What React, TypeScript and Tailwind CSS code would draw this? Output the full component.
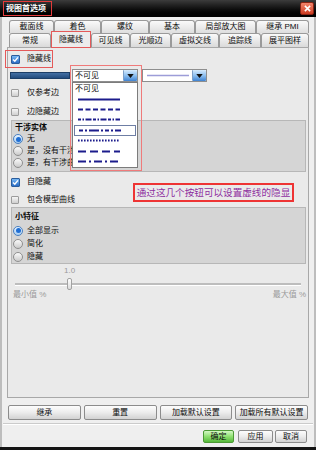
import React from 'react'

const row1 = [
  { label: '截面线', w: 'w-[45px]' },
  { label: '着色', w: 'w-[47px]' },
  { label: '螺纹', w: 'w-[48px]' },
  { label: '基本', w: 'w-[46px]' },
  { label: '局部放大图', w: 'w-[61px]' },
  { label: '继承 PMI', w: 'w-[53px]' },
]

const row2 = [
  { label: '常规', w: 'w-[42px]' },
  { label: '隐藏线', w: 'w-[40px]', active: true },
  { label: '可见线', w: 'w-[39px]' },
  { label: '光顺边', w: 'w-[41px]' },
  { label: '虚拟交线', w: 'w-[48px]' },
  { label: '追踪线', w: 'w-[42px]' },
  { label: '展平图样', w: 'w-[48px]' },
]

// dash patterns of the line-font list
const fonts = ['', '5 2.5', '3 1.5 1.5 1.5 6 1.5', '4 2 2 2 10 2 2 2', '1.6 1.4', '8 4', '8 3 2 3']

function Checkbox({ checked = false }: { checked?: boolean }) {
  if (checked) {
    return (
      <span className="flex h-[9px] w-[9px] items-center justify-center rounded-[1px] border border-[#2b5d9c] bg-linear-to-b from-[#78b8f4] to-[#2a6cc4]">
        <svg viewBox="0 0 8 8" className="h-[7px] w-[7px]">
          <path d="M1.2 4.1 3.2 6 6.8 1.6" fill="none" stroke="#fff" strokeWidth="1.6" />
        </svg>
      </span>
    )
  }
  return <span className="h-[8px] w-[8px] rounded-[1px] border border-[#9c9c9c] bg-linear-to-b from-[#f6f6f6] to-[#cfcfcf]" />
}

function Radio({ checked = false }: { checked?: boolean }) {
  return (
    <span
      className={`flex h-[10px] w-[10px] items-center justify-center rounded-full border ${
        checked
          ? 'border-[#4a7fbf] bg-linear-to-b from-[#e6f3ff] to-[#a9cdf0]'
          : 'border-[#8f8f8f] bg-linear-to-b from-[#fbfbfb] to-[#cbcbcb]'
      }`}
    >
      {checked && <span className="h-[5px] w-[5px] rounded-full bg-[#1f6ed4]" />}
    </span>
  )
}

function CheckRow({ label, checked = false, className = '' }: { label: string; checked?: boolean; className?: string }) {
  return (
    <div className={`flex h-[12px] items-center pl-[3px] ${className}`}>
      <span className="flex w-[16px]">
        <Checkbox checked={checked} />
      </span>
      <span>{label}</span>
    </div>
  )
}

function RadioRow({ label, checked = false, h = 'h-[12px]' }: { label: string; checked?: boolean; h?: string }) {
  return (
    <div className={`flex ${h} items-center pl-[1px]`}>
      <span className="flex w-[14px]">
        <Radio checked={checked} />
      </span>
      <span>{label}</span>
    </div>
  )
}

function Arrow() {
  return (
    <span className="flex h-full w-[14px] items-center justify-center rounded-[1px] border-l border-[#7d9fc8] bg-linear-to-b from-[#d6eafc] via-[#8ec0f0] to-[#3f83d2]">
      <svg viewBox="0 0 8 5" className="h-[4px] w-[7px]">
        <polygon points="0,0 8,0 4,5" fill="#111" />
      </svg>
    </span>
  )
}

function Line({ dash, color = '#1c1c8c', width = 2 }: { dash?: string; color?: string; width?: number }) {
  return (
    <svg width="42" height="3" viewBox="0 0 42 3">
      <line x1="0" y1="1.5" x2="42" y2="1.5" stroke={color} strokeWidth={width} strokeDasharray={dash || undefined} />
    </svg>
  )
}

function Button({ children, className = '' }: { children: React.ReactNode; className?: string }) {
  return (
    <div
      className={`flex items-center justify-center rounded-[2px] border border-[#8c8c8c] bg-linear-to-b from-[#fdfdfd] via-[#ececec] to-[#d2d2d2] ${className}`}
    >
      {children}
    </div>
  )
}

export default function App() {
  return (
    <div className="flex h-[450px] w-[316px] flex-col overflow-hidden bg-[#efefef] font-['Liberation_Sans','Noto_Sans_CJK_SC',sans-serif] text-[8px] leading-none text-[#0c0c0c]">
      {/* title bar */}
      <div className="flex h-[17px] shrink-0 items-center justify-between bg-linear-to-b from-[#3c3c3c] via-[#121212] to-[#000] pl-[3px] pr-[2px]">
        <span className="flex h-[15px] items-center border border-[#e23b3b] pl-[2px] pr-[5px] text-[8px] font-bold text-white">
          视图首选项
        </span>
        <span className="flex h-[13px] w-[14px] items-center justify-center rounded-[2px] border border-[#8a2414] bg-linear-to-b from-[#f4846a] to-[#cc3a20]">
          <svg viewBox="0 0 8 8" className="h-[7px] w-[7px]">
            <path d="M1 1 7 7M7 1 1 7" stroke="#fff" strokeWidth="1.8" />
          </svg>
        </span>
      </div>

      <div className="flex flex-1 flex-col border-x-2 border-[#bdbdbd]">
        {/* tabs */}
        <div className="flex flex-col pl-[7px] pt-[3px]">
          <div className="flex h-[13px]">
            {row1.map((t) => (
              <div
                key={t.label}
                className={`${t.w} flex items-center justify-center rounded-t-[3px] border border-b-0 border-[#9a9a9a] bg-linear-to-b from-[#fafafa] to-[#dedede]`}
              >
                {t.label}
              </div>
            ))}
          </div>
          <div className="flex h-[14px] items-end">
            {row2.map((t) =>
              t.active ? (
                <div
                  key={t.label}
                  className={`${t.w} relative z-10 -mb-px flex h-[17px] items-center justify-center border border-[#e45a5a] bg-[#ececec]`}
                >
                  {t.label}
                </div>
              ) : (
                <div
                  key={t.label}
                  className={`${t.w} flex h-[14px] items-center justify-center rounded-t-[3px] border border-b-0 border-[#9a9a9a] bg-linear-to-b from-[#fafafa] to-[#dadada]`}
                >
                  {t.label}
                </div>
              ),
            )}
          </div>
        </div>

        {/* tab page */}
        <div className="relative mx-[5px] flex h-[351px] shrink-0 flex-col border border-[#a8a8a8] bg-[#eaeaea] pt-[5px]">
          <div className="absolute left-[-3px] top-[2px] h-[18px] w-[48px] border border-[#e45a5a]" />
          <CheckRow label="隐藏线" checked />

          {/* colour + font + width */}
          <div className="mt-[4px] flex h-[13px] items-center pl-[2px]">
            <span className="h-[7px] w-[60px] border border-[#1d3e66] bg-linear-to-b from-[#4470a4] to-[#234c7e]" />
            <div className="relative ml-[2px] flex h-[13px] w-[66px] items-stretch border border-[#8e8e8e] bg-white">
              <span className="flex flex-1 items-center pl-[2px]">不可见</span>
              <Arrow />
              <div className="absolute left-[-1px] top-[12px] z-20 flex h-[86px] w-[66px] flex-col border border-[#7c7c7c] bg-white">
                <div className="flex h-[11px] items-center pl-[2px]">不可见</div>
                {fonts.map((d, i) => (
                  <div
                    key={i}
                    className={`mx-[1px] flex h-[10.4px] items-center pl-[4px] ${i === 3 ? 'border border-[#6e7ea4]' : ''}`}
                  >
                    <Line dash={d} />
                  </div>
                ))}
              </div>
              <div className="absolute left-[-3px] top-[-5px] z-30 h-[106px] w-[72px] border border-[#ef7a7a]" />
            </div>
            <div className="ml-[4px] flex h-[13px] w-[65px] items-stretch border border-[#8e8e8e] bg-white">
              <span className="flex flex-1 items-center pl-[4px]">
                <Line color="#9d9dd8" width={1.5} />
              </span>
              <Arrow />
            </div>
          </div>

          <CheckRow label="仅参考边" className="mt-[5px]" />
          <CheckRow label="边隐藏边" className="mt-[7px]" />

          {/* interference solids */}
          <div className="ml-[3px] mr-[2px] mt-[2px] flex flex-col border border-[#b7b7b7] bg-[#d5d5d5] pb-[2px] pt-[2px]">
            <div className="flex h-[10px] items-center pl-[3px] font-bold">干涉实体</div>
            <RadioRow label="无" checked />
            <RadioRow label="是，没有干涉曲线" />
            <RadioRow label="是，有干涉曲线" />
          </div>

          <div className="mt-[4px] flex">
            <div className="flex flex-col">
              <CheckRow label="自隐藏" checked />
              <CheckRow label="包含模型曲线" className="mt-[6px]" />
            </div>
            <div className="ml-auto mr-[14px] mt-[7px] flex h-[19px] w-[161px] items-center justify-center border-2 border-[#ee3434] text-[9.6px] text-[#8e2f9f]">
              通过这几个按钮可以设置虚线的隐显
            </div>
          </div>

          {/* small features */}
          <div className="ml-[3px] mr-[2px] mt-[1px] flex flex-col border border-[#b7b7b7] bg-[#d5d5d5] pt-[4px]">
            <div className="flex h-[10px] items-center pl-[3px] font-bold">小特征</div>
            <div className="mt-[2px] flex flex-col">
              <RadioRow label="全部显示" checked h="h-[13px]" />
              <RadioRow label="简化" h="h-[13px]" />
              <RadioRow label="隐藏" h="h-[13px]" />
            </div>
          </div>

          {/* slider */}
          <div className="mt-[2px] flex h-[10px] items-center pl-[56px] text-[#9a9a9a]">1.0</div>
          <div className="mt-[2px] flex h-[12px] items-center pl-[7px] pr-[7px]">
            <span className="h-[3px] w-[52px] border-t-2 border-[#bdbdbd] bg-white" />
            <span className="h-[12px] w-[5px] rounded-[2px] border border-[#a2a2a2] bg-linear-to-b from-white to-[#dcdcdc]" />
            <span className="h-[3px] flex-1 border-t-2 border-[#bdbdbd] bg-white" />
          </div>
          <div className="flex h-[10px] items-center justify-between pl-[5px] pr-[2px] text-[#9a9a9a]">
            <span>最小值 %</span>
            <span>最大值 %</span>
          </div>
        </div>

        {/* reset buttons */}
        <div className="mt-[7px] flex h-[15px] gap-[3px] px-[6px]">
          <Button className="flex-1">继承</Button>
          <Button className="flex-1">重置</Button>
          <Button className="flex-1">加载默认设置</Button>
          <Button className="flex-1">加载所有默认设置</Button>
        </div>

        <div className="mx-[1px] mt-[3px] h-[2px] border-t border-[#cbcbcb] bg-white" />

        {/* dialog buttons */}
        <div className="mt-[5px] flex h-[13px] justify-end pr-[7px]">
          <div className="flex w-[31px] items-center justify-center rounded-[2px] border border-[#4c9a35] bg-linear-to-b from-[#d4f8c4] via-[#8ee070] to-[#56b83a]">
            确定
          </div>
          <Button className="ml-[4px] w-[35px]">应用</Button>
          <Button className="ml-[2px] w-[32px]">取消</Button>
        </div>
      </div>

      <div className="h-[3px] shrink-0 bg-[#141414]" />
    </div>
  )
}
